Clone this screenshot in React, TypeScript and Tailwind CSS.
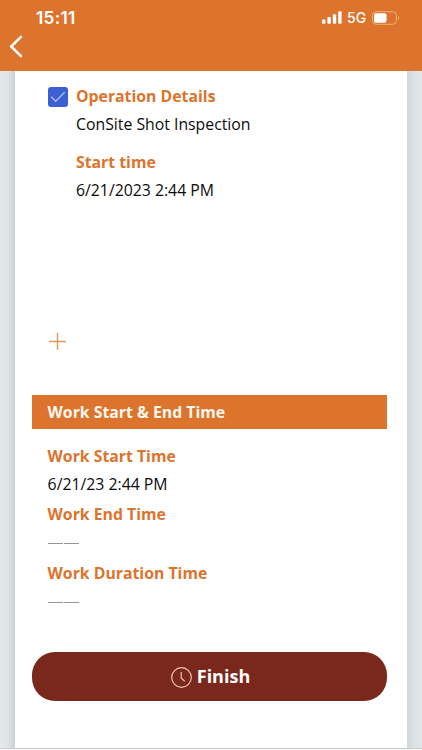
import type { ReactNode } from "react";

function Label({ children }: { children: ReactNode }) {
  return <h3 className="h-7 whitespace-nowrap text-[15.8px] leading-7 font-bold text-[#dc742d]">{children}</h3>;
}

function Value({ children }: { children: ReactNode }) {
  return <p className="h-7 whitespace-nowrap text-[15.8px] leading-7 text-[#0c0c0c]">{children}</p>;
}

function EmptyValue() {
  return (
    <div className="flex h-[30.5px] items-center gap-px">
      <span className="h-px w-[15px] bg-[#949494]" />
      <span className="h-px w-[15px] bg-[#949494]" />
    </div>
  );
}

function StatusBar() {
  return (
    <div className="flex h-[35px] items-center justify-between pr-[22px] pl-9 font-['Inter',sans-serif] text-white">
      <span className="text-[17.3px] font-semibold tracking-[0.25px]">15:11</span>
      <div className="flex items-center">
        <svg width="20" height="13" viewBox="0 0 20 13" fill="#fff">
          <rect x="0" y="8.5" width="3.4" height="4.2" rx="1" />
          <rect x="5.4" y="6" width="3.4" height="6.7" rx="1" />
          <rect x="10.8" y="3.2" width="3.4" height="9.5" rx="1" />
          <rect x="16.2" y="0.3" width="3.4" height="12.4" rx="1" />
        </svg>
        <span className="ml-[5px] w-[20px] text-[14px] leading-5 font-medium">5G</span>
        <svg className="ml-[5px]" width="28" height="14" viewBox="0 0 28 14">
          <rect x="0.5" y="0.7" width="24" height="12.6" rx="3.8" fill="none" stroke="#f0b070" />
          <rect x="2" y="2.3" width="12.5" height="9.4" rx="2" fill="#fff" />
          <path d="M26 5v4c1.6-.6 1.6-3.4 0-4z" fill="#f0b070" />
        </svg>
      </div>
    </div>
  );
}

export default function App() {
  return (
    <div className="flex h-[750px] w-[422px] flex-col overflow-hidden bg-white font-['Open_Sans','Noto_Sans',sans-serif]">
      <header className="h-[71px] shrink-0 bg-[#dc742d]">
        <StatusBar />
        <button aria-label="Back" className="ml-[9px] block">
          <svg width="14" height="23" viewBox="0 0 14 23" fill="none" stroke="#fff" strokeWidth="2.5" strokeLinecap="round" strokeLinejoin="round">
            <path d="M12 1.8 2.2 11.5 12 21.2" />
          </svg>
        </button>
      </header>
      <div className="flex h-[677px] shrink-0">
        <div className="w-[15px] bg-linear-to-r from-[#e4e9ec] via-[#dfe4e7] to-[#cdd0d3]" />
        <main className="flex w-[392px] flex-col bg-white pt-[11px] pr-5 pl-[17px]">
          <section className="flex gap-2 pl-4">
            <span className="mt-[5px] flex size-5 items-center justify-center rounded-[3px] bg-[#3c5fd2]">
              <svg width="16" height="12" viewBox="0 0 16 12" fill="none" stroke="#a9bdf5" strokeWidth="1.4">
                <path d="m1.3 5.8 4.4 4.5L14.7 1.2" />
              </svg>
            </span>
            <div>
              <Label>Operation Details</Label>
              <Value>ConSite Shot Inspection</Value>
              <div className="mt-2.5">
                <Label>Start time</Label>
                <Value>6/21/2023 2:44 PM</Value>
              </div>
            </div>
          </section>
          <button aria-label="Add" className="mt-[129px] ml-[17px] block w-[17px]">
            <svg width="17" height="17" viewBox="0 0 17 17" stroke="#e29a63" strokeWidth="1.5">
              <path d="M8.5 0v17M0 8.5h17" />
            </svg>
          </button>
          <h2 className="mt-[45px] h-[34px] bg-[#dc742d] pl-[15.6px] text-[15.8px] leading-[34px] font-bold text-[#fff8ee]">
            Work Start &amp; End Time
          </h2>
          <section className="mt-[13px] pl-[15.6px]">
            <Label>Work Start Time</Label>
            <Value>6/21/23 2:44 PM</Value>
            <div className="mt-[2.4px]">
              <Label>Work End Time</Label>
              <EmptyValue />
            </div>
            <Label>Work Duration Time</Label>
            <EmptyValue />
          </section>
          <button className="mt-[34.6px] flex h-[49px] w-[355px] items-center justify-center gap-[5px] rounded-[23px] bg-[#7b281c] pl-0.5 text-[18px] font-bold text-white">
            <svg className="mt-[3px]" width="21" height="21" viewBox="0 0 21 21" fill="none" stroke="#efc4b5" strokeWidth="1.2">
              <circle cx="10.5" cy="10.5" r="9.8" />
              <path d="M10.2 5v6l3.5 3.2" />
            </svg>
            Finish
          </button>
        </main>
        <div className="w-[15px] bg-linear-to-r from-[#d2d6da] via-[#dde2e5] to-[#e2e7ea]" />
      </div>
      <footer className="h-0.5 border-t border-[#c9cacc] bg-[#f7f7f7]" />
    </div>
  );
}
